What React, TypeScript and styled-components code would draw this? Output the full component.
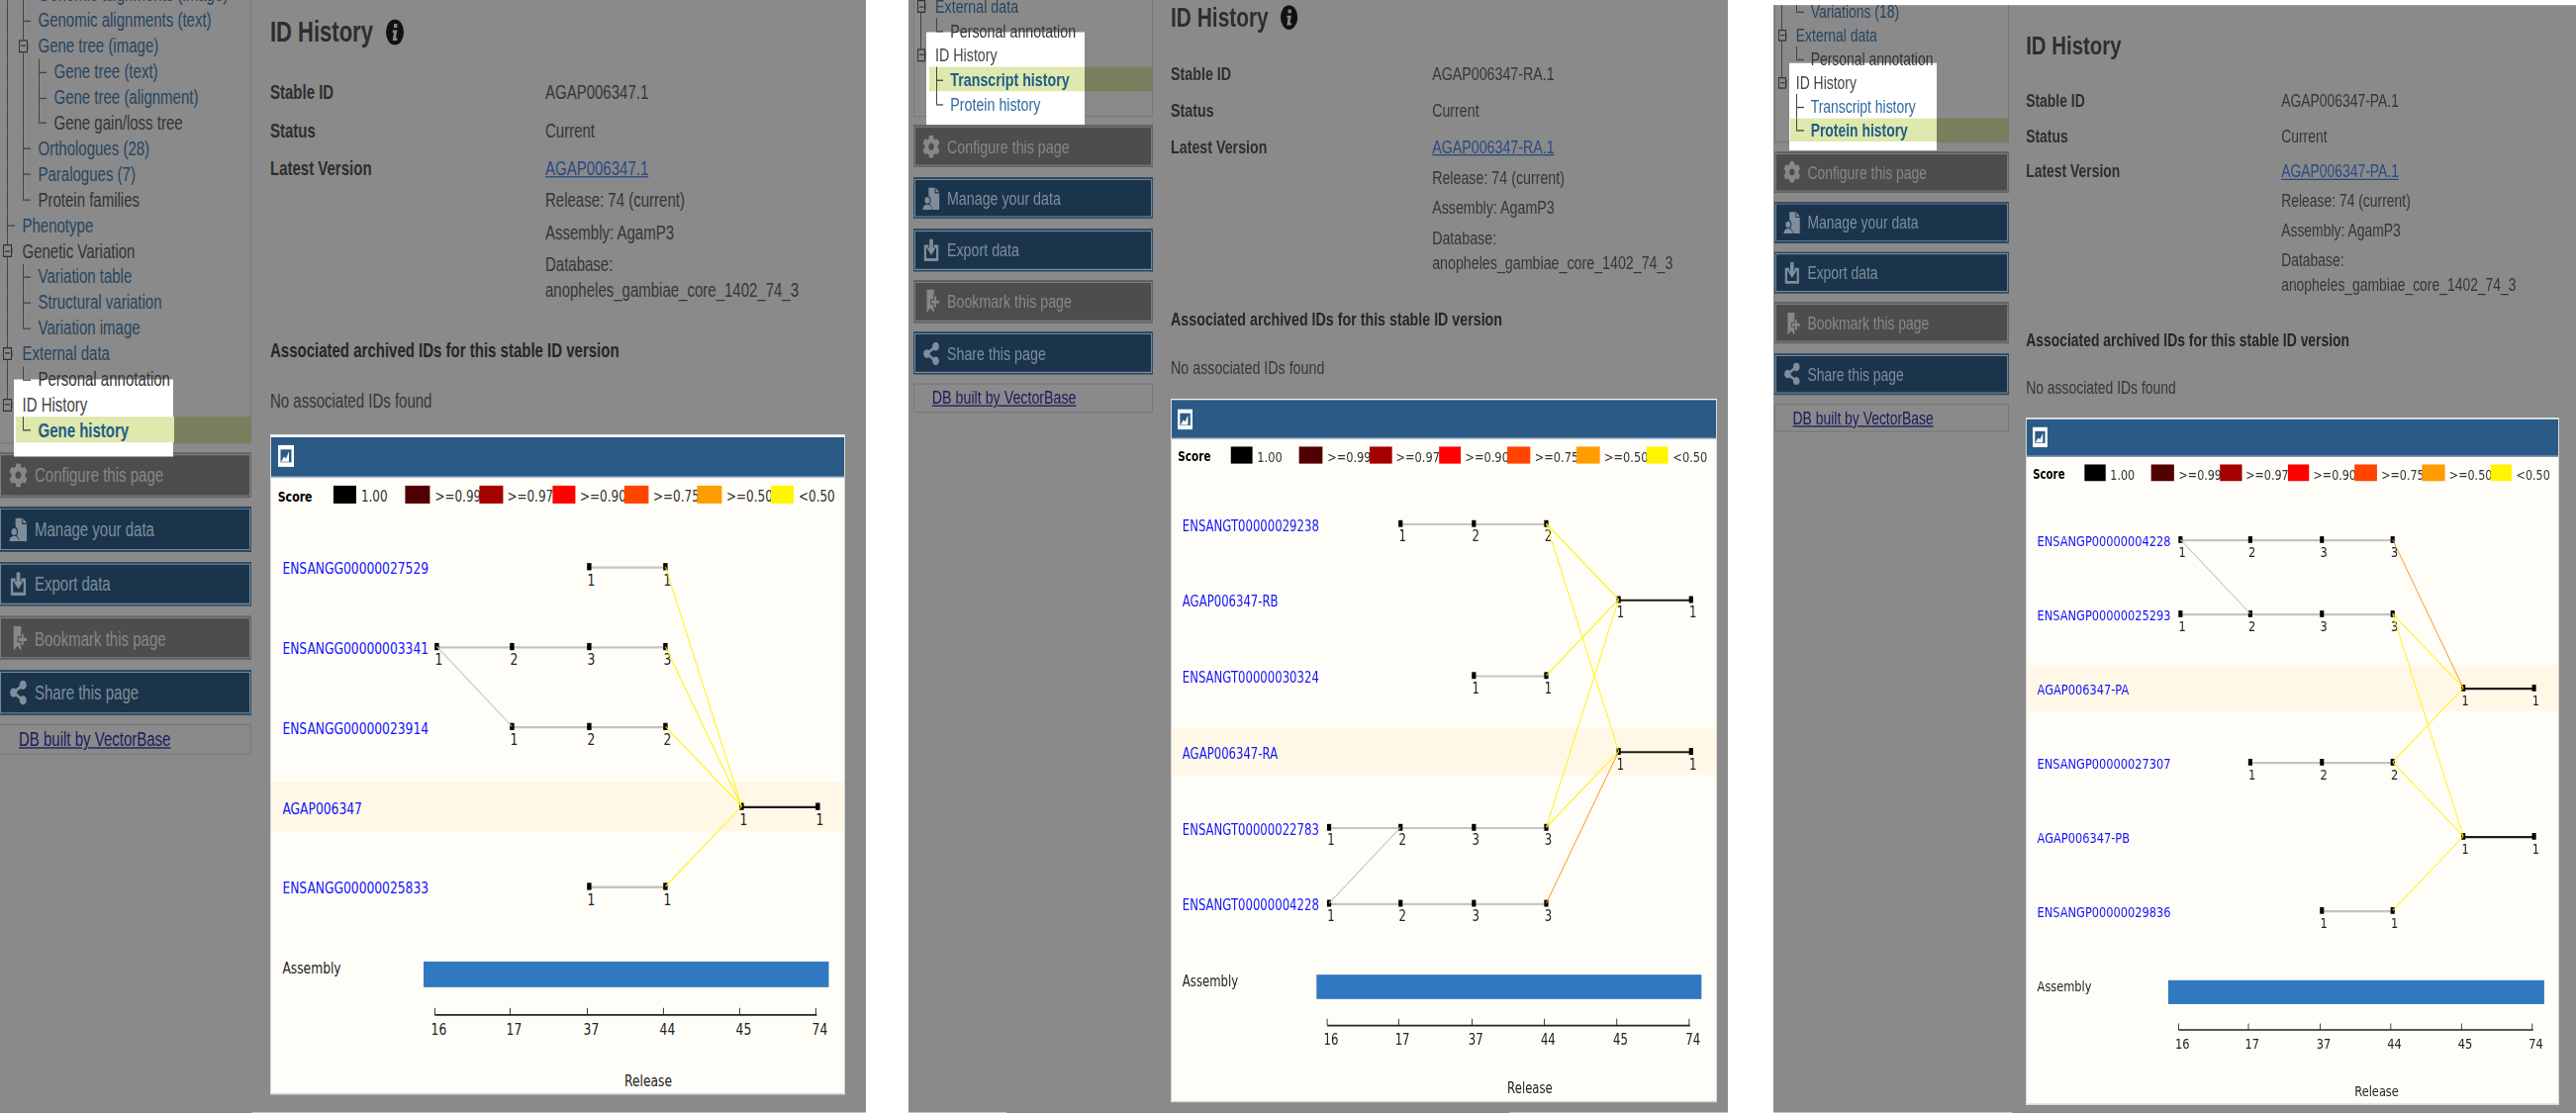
import React from "react";
import styled, { createGlobalStyle, css } from "styled-components";
import { FaCog, FaShareAlt } from "react-icons/fa";

// the source capture is stretched vertically, so all panels are laid out at
// natural size and the whole stage is scaled by this on the y axis
const STRETCH = 1.3;
const STAGE_H = 1125 / STRETCH;

const GlobalStyle = createGlobalStyle`
  html, body {
    margin: 0;
    width: 2603px;
    height: 1125px;
    overflow: hidden;
    background: #fff;
    font-family: "Liberation Sans", Arial, sans-serif;
  }
`;

const Stage = styled.div`
  display: flex;
  align-items: flex-start;
  width: 2603px;
  height: ${STAGE_H}px;
  transform: scaleY(${STRETCH});
  transform-origin: top left;
  filter: blur(0.4px);
`;

const PanelBox = styled.section<{ $zoom: number; $width: number; $gap: number; $top: number }>`
  zoom: ${(p) => p.$zoom};
  flex: none;
  display: flex;
  align-items: flex-start;
  width: ${(p) => p.$width}px;
  height: ${(p) => (STAGE_H - p.$top) / p.$zoom}px;
  margin-left: ${(p) => p.$gap / p.$zoom}px;
  margin-top: ${(p) => p.$top / p.$zoom}px;
  overflow: hidden;
  background: #8a8a8a;
  font-size: 15px;
  color: #363636;
`;

const Side = styled.aside<{ $left: number; $top: number }>`
  flex: none;
  width: 255px;
  margin-left: ${(p) => p.$left}px;
  margin-top: ${(p) => p.$top}px;
`;

const Tree = styled.div`
  position: relative;
  border: 1px solid #7a7a7a;
  border-top: 0;
  margin-bottom: -1px;
`;

const Spot = styled.div<{ $top: number; $left: number; $width: number; $height: number }>`
  position: absolute;
  top: ${(p) => p.$top}px;
  left: ${(p) => p.$left}px;
  width: ${(p) => p.$width}px;
  height: ${(p) => p.$height}px;
  background: #fff;
  z-index: 1;
`;

const Row = styled.div<{ $lit?: number }>`
  position: relative;
  z-index: 2;
  display: flex;
  align-items: center;
  height: 19.92px;
  white-space: nowrap;
  ${(p) =>
    p.$lit &&
    css`
      background: linear-gradient(
        to right,
        transparent 16px,
        #dfe8ad 16px,
        #dfe8ad ${p.$lit}px,
        #797f5d ${p.$lit}px
      );
    `}
`;

const Cell = styled.span<{ $kind: string }>`
  position: relative;
  flex: none;
  width: 16px;
  height: 100%;

  ${(p) =>
    p.$kind !== " " &&
    css`
      &::before {
        content: "";
        position: absolute;
        left: 7px;
        top: 0;
        bottom: ${p.$kind === "l" || p.$kind === "B" ? "50%" : "0"};
        width: 1px;
        background: #444;
      }
    `}

  ${(p) =>
    (p.$kind === "t" || p.$kind === "l") &&
    css`
      &::after {
        content: "";
        position: absolute;
        left: 7px;
        top: 50%;
        width: 8px;
        height: 1px;
        background: #444;
      }
    `}

  ${(p) =>
    (p.$kind === "b" || p.$kind === "B") &&
    css`
      &::after {
        content: "";
        position: absolute;
        left: 3px;
        top: 5px;
        width: 7px;
        height: 8px;
        border: 1px solid #333;
        background: linear-gradient(#333, #333) center / 5px 1px no-repeat #8a8a8a;
        box-shadow: 3px 0 0 -2.5px #444;
      }
    `}
`;

const Label = styled.span<{ $tone: string }>`
  margin-left: 6.5px;
  ${(p) => p.$tone === "link" && "color: #27455f;"}
  ${(p) => p.$tone === "plain" && "color: #333;"}
  ${(p) => p.$tone === "dark" && "color: #444;"}
  ${(p) => p.$tone === "spot" && "color: #2f6aa3;"}
  ${(p) => p.$tone === "active" && "color: #1f5c88; font-weight: bold;"}
`;

const ActionButton = styled.div<{ $off?: boolean }>`
  display: flex;
  align-items: center;
  gap: 7px;
  box-sizing: border-box;
  height: 34.6px;
  margin-top: 7.7px;
  padding-left: 9px;
  border: 1px solid ${(p) => (p.$off ? "#666" : "#2c4e6e")};
  box-shadow: inset 0 0 0 1px ${(p) => (p.$off ? "#7d7d7d" : "#7b8a96")};
  background: ${(p) => (p.$off ? "#4d4d4d" : "#1a344b")};
  color: ${(p) => (p.$off ? "#878787" : "#7f8e9a")};

  & > svg {
    flex: none;
    width: 19px;
    height: 19px;
  }
`;

const FootBox = styled.div`
  box-sizing: border-box;
  height: 24px;
  margin-top: 7.7px;
  padding-left: 19px;
  line-height: 22px;
  border: 1px solid #7a7a7a;
`;

const FootLink = styled.a`
  color: #1b1b5e;
  text-decoration: underline;
`;

const Main = styled.main<{ $top: number }>`
  flex: none;
  width: 581px;
  margin-left: 19px;
  margin-top: ${(p) => p.$top}px;
`;

const Title = styled.h1`
  display: flex;
  align-items: center;
  gap: 13px;
  height: 30px;
  margin: 0 0 21.3px;
  font-size: 22px;
  font-weight: bold;
  color: #2e2e2e;

  & > svg {
    width: 18px;
    height: 20px;
  }
`;

const Fields = styled.dl`
  display: grid;
  grid-template-columns: 278px 1fr;
  row-gap: 9.3px;
  margin: 0;
  line-height: 20.6px;
`;

const FieldName = styled.dt`
  font-weight: bold;
  color: #2e2e2e;
`;

const FieldValue = styled.dd`
  margin: 0;
`;

const ValueLine = styled.div<{ $gap?: number }>`
  margin-top: ${(p) => p.$gap ?? 0}px;
`;

const VersionLink = styled.a`
  color: #2a4a82;
  text-decoration: underline;
`;

const Heading = styled.h2`
  margin: 25.6px 0 18.9px;
  font-size: 15px;
  line-height: 20.6px;
  font-weight: bold;
  color: #262626;
`;

const Note = styled.p`
  margin: 0 0 15px;
  line-height: 20.6px;
`;

const Chart = styled.figure`
  margin: 0 0 0 -0.5px;
  border: 1px solid #d8d8d8;
  border-top: 2px solid #f6f6f6;
  background: #fffdf7;
`;

const ChartHead = styled.div`
  display: flex;
  align-items: center;
  height: 30px;
  padding-left: 7px;
  background: #2a5a85;
  border-bottom: 1px solid #6f8ca8;

  & > svg {
    width: 16px;
    height: 17px;
  }
`;

const ChartSvg = styled.svg`
  display: block;
  font-family: "DejaVu Sans", sans-serif;
  font-size: 12.3px;

  & text {
    dominant-baseline: central;
  }
`;

const InfoIcon = () => (
  <svg viewBox="0 0 18 20">
    <ellipse cx="9" cy="10" rx="9" ry="10" fill="#111" />
    <path d="M8 3.5h3.4v3H8zM6.8 8.5h4.6L10 14.5h1.4v2H6.6L8 10.5H6.8z" fill="#8a8a8a" />
  </svg>
);

const ManageIcon = () => (
  <svg viewBox="0 0 20 20" fill="currentColor">
    <path d="M7 1h7v5h5v14h-8c0-2-1-4-3-4.800 1-1 1.500-2 1.500-3.200C9.500 10 8.500 8.500 7 8z" />
    <path d="M15 1l4 4h-4z" />
    <circle cx="5.500" cy="12" r="2.800" />
    <path d="M0.500 20c0-3 2-4.500 5-4.500s5 1.500 5 4.500z" />
  </svg>
);

const ExportIcon = () => (
  <svg viewBox="0 0 20 20" fill="currentColor">
    <path d="M7 6H2v14h16V6h-5v2.500h2.500v9h-11v-9H7z" />
    <path d="M8 1h4v7.500h3l-5 6.500-5-6.500h3z" />
  </svg>
);

const BookmarkIcon = () => (
  <svg viewBox="0 0 20 20" fill="currentColor">
    <path d="M5 0h8v20l-4-4-4 4z" />
    <path d="M13 5.500v3.500H9.500v3.500H13V16h3v-3.500h3.500V9H16V5.500z" stroke="#4d4d4d" strokeWidth="1" />
  </svg>
);

const GraphIcon = () => (
  <svg viewBox="0 0 16 17">
    <rect width="16" height="17" fill="#fff" />
    <rect x="2.500" y="3.500" width="11" height="10" fill="#2a5a85" />
    <path d="M3 13l3-4 2 1.500L11 5v8z" fill="#fff" />
  </svg>
);

type TreeRow = [string, string, string];

const geneRows: TreeRow[] = [
  ["|t", "Genomic alignments (image)", "link"],
  ["|t", "Genomic alignments (text)", "link"],
  ["|b", "Gene tree (image)", "link"],
  ["||t", "Gene tree (text)", "link"],
  ["||t", "Gene tree (alignment)", "link"],
  ["||l", "Gene gain/loss tree", "plain"],
  ["|t", "Orthologues (28)", "link"],
  ["|t", "Paralogues (7)", "link"],
  ["|l", "Protein families", "plain"],
  ["t", "Phenotype", "link"],
  ["b", "Genetic Variation", "plain"],
  ["|t", "Variation table", "link"],
  ["|t", "Structural variation", "link"],
  ["|l", "Variation image", "link"],
  ["b", "External data", "link"],
  ["|l", "Personal annotation", "plain"],
  ["B", "ID History", "dark"],
  [" l", "Gene history", "active"],
];

const transcriptRows: TreeRow[] = [
  ["b", "External data", "link"],
  ["|l", "Personal annotation", "plain"],
  ["B", "ID History", "dark"],
  [" t", "Transcript history", "active"],
  [" l", "Protein history", "spot"],
];

const proteinRows: TreeRow[] = [
  ["|l", "Variations (18)", "link"],
  ["b", "External data", "link"],
  ["|l", "Personal annotation", "plain"],
  ["B", "ID History", "dark"],
  [" t", "Transcript history", "spot"],
  [" l", "Protein history", "active"],
];

const actions = [
  { label: "Configure this page", off: true, icon: <FaCog /> },
  { label: "Manage your data", off: false, icon: <ManageIcon /> },
  { label: "Export data", off: false, icon: <ExportIcon /> },
  { label: "Bookmark this page", off: true, icon: <BookmarkIcon /> },
  { label: "Share this page", off: false, icon: <FaShareAlt /> },
];

const COL_X = [168.4, 244.4, 322.4, 399.4, 476.4, 553.4];
const RELEASES = ["16", "17", "37", "44", "45", "74"];
const ROW_H = 62.15;
const rowY = (i: number) => 69.6 + ROW_H * i;

const legend = [
  { x: 63.9, w: 23, fill: "#000", text: "1.00", tx: 91.9 },
  { x: 136.4, w: 25, fill: "#500000", text: ">=0.99", tx: 166.4 },
  { x: 211.4, w: 24, fill: "#a50000", text: ">=0.97", tx: 239.4 },
  { x: 285.4, w: 23, fill: "#ff0000", text: ">=0.90", tx: 313 },
  { x: 357.9, w: 24.5, fill: "#ff4500", text: ">=0.75", tx: 387 },
  { x: 431.4, w: 25, fill: "#ff9c00", text: ">=0.50", tx: 461 },
  { x: 506, w: 23, fill: "#fff500", text: "<0.50", tx: 534 },
];

type Track = { name: string; start: number; marks: number[]; current?: boolean; band?: boolean };
type Link = [number, number, number, number, string];

const YELLOW = "#fff200";
const ORANGE = "#f7941d";
const GREY = "#c4c4c4";

const History = ({ tracks, links }: { tracks: Track[]; links: Link[] }) => {
  const foot = tracks.length * ROW_H;
  return (
    <ChartSvg width={579} height={foot + 168.95} viewBox={`1 0 579 ${foot + 168.95}`}>
      <text x={7.7} y={14.9} fontWeight="bold" fontSize="11">
        Score
      </text>
      {legend.map((l) => (
        <text key={l.text} x={l.tx} y={14.9} fill="#333" fontSize="12">
          {l.text}
        </text>
      ))}
      {legend.map((l) => (
        <rect key={l.fill} x={l.x} y={6.6} width={l.w} height={13.9} fill={l.fill} />
      ))}
      {tracks.map((t, i) =>
        t.band ? <rect key={t.name} y={rowY(i) - 19.25} width={581} height={38.5} fill="#fff8e6" /> : null
      )}
      {tracks.map((t, i) => (
        <g key={t.name}>
          <text x={12.4} y={rowY(i) + 1.5} fill="#1414ff">
            {t.name}
          </text>
          <line
            x1={COL_X[t.start]}
            x2={COL_X[t.start + t.marks.length - 1]}
            y1={rowY(i) + 0.6}
            y2={rowY(i) + 0.6}
            stroke={t.current ? "#1c1c1c" : GREY}
            strokeWidth={1.8}
          />
          {t.marks.map((m, j) => (
            <g key={j}>
              <rect x={COL_X[t.start + j] - 2.2} y={rowY(i) - 2.8} width={4.4} height={5.6} fill="#000" />
              <text x={COL_X[t.start + j] + 2} y={rowY(i) + 10.2} textAnchor="middle" fill="#222">
                {m}
              </text>
            </g>
          ))}
        </g>
      ))}
      {links.map(([c1, r1, c2, r2, color], i) => (
        <line key={i} x1={COL_X[c1]} y1={rowY(r1)} x2={COL_X[c2]} y2={rowY(r2)} stroke={color} strokeWidth={0.9} />
      ))}
      <text x={12.4} y={foot + 71.25} fill="#222">
        Assembly
      </text>
      <rect x={155} y={foot + 65.85} width={409.5} height={20} fill="#3079c0" />
      <line x1={COL_X[0] - 2} x2={COL_X[5] - 1} y1={foot + 107.45} y2={foot + 107.45} stroke="#222" strokeWidth={1.4} />
      {RELEASES.map((r, i) => (
        <g key={r}>
          <line x1={COL_X[i] - 2} x2={COL_X[i] - 2} y1={foot + 102} y2={foot + 107.45} stroke="#222" strokeWidth={0.9} />
          <text x={COL_X[i] + 2} y={foot + 118.95} textAnchor="middle" fill="#222">
            {r}
          </text>
        </g>
      ))}
      <text x={382} y={foot + 158.55} textAnchor="middle" fill="#222">
        Release
      </text>
    </ChartSvg>
  );
};

type PanelProps = {
  zoom: number;
  width: number;
  gap: number;
  top: number;
  sideLeft: number;
  treeTop: number;
  mainTop: number;
  lit: number;
  spot: { top: number; left: number; width: number; height: number };
  rows: TreeRow[];
  info: boolean;
  stableId: string;
  tracks: Track[];
  links: Link[];
};

const Panel = (p: PanelProps) => (
  <PanelBox $zoom={p.zoom} $width={p.width} $gap={p.gap} $top={p.top}>
    <Side $left={p.sideLeft} $top={p.treeTop}>
      <Tree>
        <Spot $top={p.spot.top} $left={p.spot.left} $width={p.spot.width} $height={p.spot.height} />
        {p.rows.map(([prefix, label, tone]) => (
          <Row key={label} $lit={tone === "active" ? p.lit : undefined}>
            {prefix.split("").map((k, i) => (
              <Cell key={i} $kind={k} />
            ))}
            <Label $tone={tone}>{label}</Label>
          </Row>
        ))}
      </Tree>
      {actions.map((a) => (
        <ActionButton key={a.label} $off={a.off}>
          {a.icon}
          {a.label}
        </ActionButton>
      ))}
      <FootBox>
        <FootLink>DB built by VectorBase</FootLink>
      </FootBox>
    </Side>
    <Main $top={p.mainTop}>
      <Title>
        ID History
        {p.info && <InfoIcon />}
      </Title>
      <Fields>
        <FieldName>Stable ID</FieldName>
        <FieldValue>{p.stableId}</FieldValue>
        <FieldName>Status</FieldName>
        <FieldValue>Current</FieldValue>
        <FieldName>Latest Version</FieldName>
        <FieldValue>
          <VersionLink>{p.stableId}</VersionLink>
          <ValueLine $gap={4.2}>Release: 74 (current)</ValueLine>
          <ValueLine $gap={4.2}>Assembly: AgamP3</ValueLine>
          <ValueLine $gap={4.2}>Database:</ValueLine>
          <ValueLine>anopheles_gambiae_core_1402_74_3</ValueLine>
        </FieldValue>
      </Fields>
      <Heading>Associated archived IDs for this stable ID version</Heading>
      <Note>No associated IDs found</Note>
      <Chart>
        <ChartHead>
          <GraphIcon />
        </ChartHead>
        <History tracks={p.tracks} links={p.links} />
      </Chart>
    </Main>
  </PanelBox>
);

const geneTracks: Track[] = [
  { name: "ENSANGG00000027529", start: 2, marks: [1, 1] },
  { name: "ENSANGG00000003341", start: 0, marks: [1, 2, 3, 3] },
  { name: "ENSANGG00000023914", start: 1, marks: [1, 2, 2] },
  { name: "AGAP006347", start: 4, marks: [1, 1], current: true, band: true },
  { name: "ENSANGG00000025833", start: 2, marks: [1, 1] },
];

const geneLinks: Link[] = [
  [0, 1, 1, 2, GREY],
  [3, 0, 4, 3, YELLOW],
  [3, 1, 4, 3, YELLOW],
  [3, 2, 4, 3, YELLOW],
  [3, 4, 4, 3, YELLOW],
];

const transcriptTracks: Track[] = [
  { name: "ENSANGT00000029238", start: 1, marks: [1, 2, 2] },
  { name: "AGAP006347-RB", start: 4, marks: [1, 1], current: true },
  { name: "ENSANGT00000030324", start: 2, marks: [1, 1] },
  { name: "AGAP006347-RA", start: 4, marks: [1, 1], current: true, band: true },
  { name: "ENSANGT00000022783", start: 0, marks: [1, 2, 3, 3] },
  { name: "ENSANGT00000004228", start: 0, marks: [1, 2, 3, 3] },
];

const transcriptLinks: Link[] = [
  [0, 5, 1, 4, GREY],
  [3, 0, 4, 1, YELLOW],
  [3, 0, 4, 3, YELLOW],
  [3, 2, 4, 1, YELLOW],
  [3, 4, 4, 1, YELLOW],
  [3, 4, 4, 3, YELLOW],
  [3, 5, 4, 3, ORANGE],
];

const proteinTracks: Track[] = [
  { name: "ENSANGP00000004228", start: 0, marks: [1, 2, 3, 3] },
  { name: "ENSANGP00000025293", start: 0, marks: [1, 2, 3, 3] },
  { name: "AGAP006347-PA", start: 4, marks: [1, 1], current: true, band: true },
  { name: "ENSANGP00000027307", start: 1, marks: [1, 2, 2] },
  { name: "AGAP006347-PB", start: 4, marks: [1, 1], current: true },
  { name: "ENSANGP00000029836", start: 2, marks: [1, 1] },
];

const proteinLinks: Link[] = [
  [0, 0, 1, 1, GREY],
  [3, 0, 4, 2, ORANGE],
  [3, 1, 4, 2, YELLOW],
  [3, 1, 4, 4, YELLOW],
  [3, 3, 4, 2, YELLOW],
  [3, 3, 4, 4, YELLOW],
  [3, 5, 4, 4, YELLOW],
];

export default function App() {
  return (
    <>
      <GlobalStyle />
      <Stage>
        <Panel
          zoom={1}
          width={875}
          gap={0}
          top={0}
          sideLeft={-1}
          treeTop={-14}
          mainTop={10.4}
          lit={176}
          spot={{ top: 309.4, left: 14, width: 161, height: 59.2 }}
          rows={geneRows}
          info
          stableId="AGAP006347.1"
          tracks={geneTracks}
          links={geneLinks}
        />
        <Panel
          zoom={0.95}
          width={871.6}
          gap={43}
          top={0}
          sideLeft={5}
          treeTop={-4.8}
          mainTop={-0.5}
          lit={181}
          spot={{ top: 30.7, left: 13, width: 168, height: 75.9 }}
          rows={transcriptRows}
          info
          stableId="AGAP006347-RA.1"
          tracks={transcriptTracks}
          links={transcriptLinks}
        />
        <Panel
          zoom={0.928}
          width={874}
          gap={46}
          top={3.85}
          sideLeft={1}
          treeTop={-4.7}
          mainTop={18.7}
          lit={176}
          spot={{ top: 53.3, left: 15, width: 160.6, height: 73 }}
          rows={proteinRows}
          info={false}
          stableId="AGAP006347-PA.1"
          tracks={proteinTracks}
          links={proteinLinks}
        />
      </Stage>
    </>
  );
}
